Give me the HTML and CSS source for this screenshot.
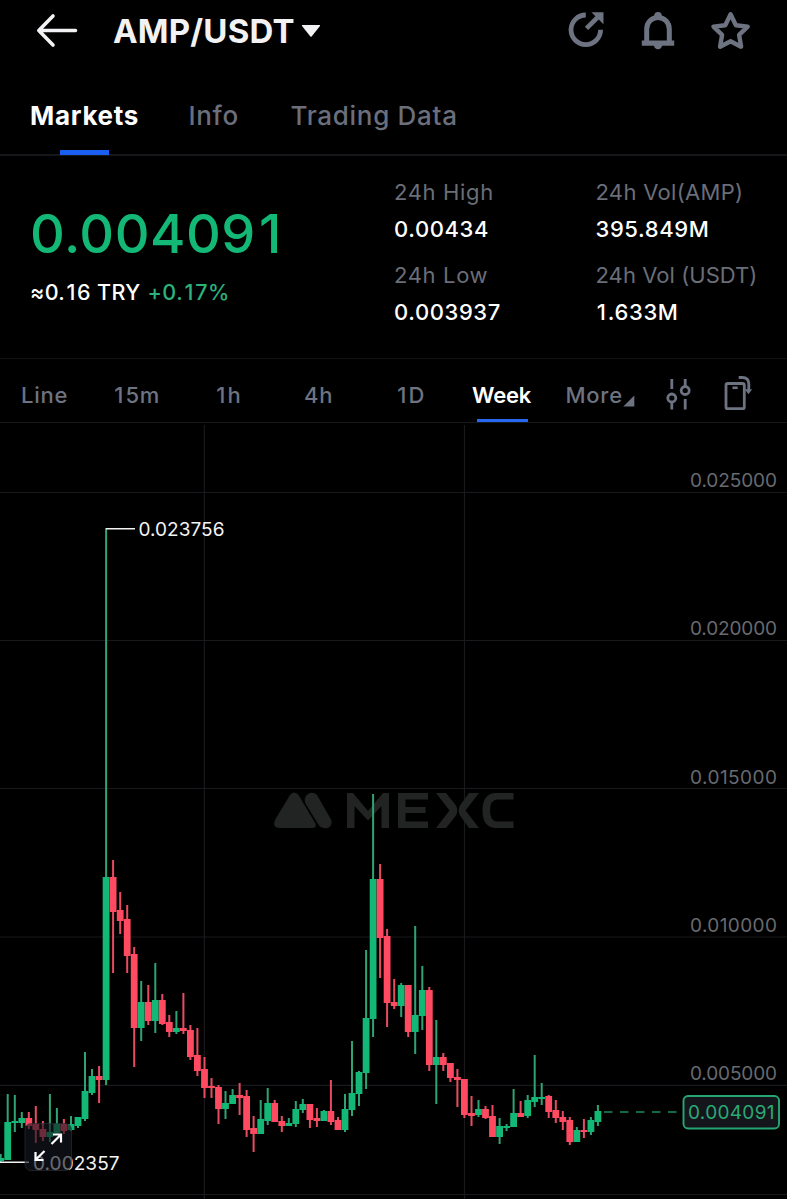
FILE: index.html
```html
<!DOCTYPE html>
<html lang="en">
<head>
<meta charset="utf-8">
<title>AMP/USDT</title>
<link rel="stylesheet" href="styles.css">
</head>
<body>
<header class="topbar">
  <svg class="back" width="44" height="40" viewBox="34 11 44 40"><path d="M53 16 38.800 30.500 53 45M39 30.500H75.500" fill="none" stroke="#f2f2f4" stroke-width="3.600" stroke-linecap="round" stroke-linejoin="round"/></svg>
  <h1 class="pair"><span>AMP/USDT</span></h1>
  <svg class="caret" width="20" height="14" viewBox="0 0 20 14"><path d="M1.500 1h17a.7.7 0 0 1 .5 1l-8.400 10.500a.8.8 0 0 1-1.200 0L1 2a.7.7 0 0 1 .5-1z" fill="#f2f2f4"/></svg>
  <div class="actions">
    <svg width="40" height="44" viewBox="566 8 40 44"><path d="M585.800 15A14.800 14.800 0 1 0 600.600 29.800" fill="none" stroke="#6d7380" stroke-width="4.800"/><path d="M586.500 28.300 598.500 16.500" fill="none" stroke="#6d7380" stroke-width="4.600"/><path d="M591.500 12.200H603.500V24.300Z" fill="#6d7380"/></svg>
    <svg width="40" height="44" viewBox="637.500 8 40 44"><path d="M647.200 42V29a11.200 11.500 0 0 1 22.600 0V42" fill="none" stroke="#6d7380" stroke-width="5"/><path d="M642.300 40.500H674.700V45.800H642.300Z" fill="#6d7380"/><circle cx="658.500" cy="15.700" r="3.800" fill="#6d7380"/><path d="M654.300 45h8.400a4.200 4.200 0 0 1-8.400 0" fill="#6d7380"/></svg>
    <svg width="42" height="44" viewBox="709 8 42 44"><path d="M730.600 14.300 735.900 25.200 747.700 26.600 739.100 34.900 741.100 46.700 730.600 41.200 720.100 46.700 722.100 34.900 713.500 26.600 725.300 25.200Z" fill="none" stroke="#6d7380" stroke-width="4.400" stroke-linejoin="round"/></svg>
  </div>
</header>
<nav class="tabs">
  <div class="tab tab-on t1"><span>Markets</span></div>
  <div class="tab t2"><span>Info</span></div>
  <div class="tab t3"><span>Trading Data</span></div>
</nav>
<section class="stats">
  <div class="quote">
    <div class="price"><span>0.00409<i>1</i></span></div>
    <div class="sub"><span class="fiat">≈0.<i>1</i>6 TRY</span><span class="chg">+0.<i>1</i>7%</span></div>
  </div>
  <dl class="col">
    <dt><span>24h High</span></dt><dd><span>0.00434</span></dd>
    <dt><span>24h Low</span></dt><dd><span>0.003937</span></dd>
  </dl>
  <dl class="col col-vol">
    <dt class="vol-base"><span>24h Vol(AMP)</span></dt><dd><span>395.849M</span></dd>
    <dt><span>24h Vol (USDT)</span></dt><dd><span><i>1</i>.633M</span></dd>
  </dl>
</section>
<nav class="intervals">
  <div class="iv i1"><span>Line</span></div>
  <div class="iv i2"><span><i>1</i>5m</span></div>
  <div class="iv i3"><span><i>1</i>h</span></div>
  <div class="iv i4"><span>4h</span></div>
  <div class="iv i5"><span><i>1</i>D</span></div>
  <div class="iv i6 iv-on"><span>Week</span></div>
  <div class="iv i7"><span>More</span><svg class="tri" width="12" height="12" viewBox="0 0 12 12"><path d="M11.300.5V11.500H.300Z" fill="#6d7380"/></svg></div>
  <svg class="tool" width="28" height="36" viewBox="664 376 28 36"><g fill="none" stroke="#6d7380" stroke-width="2.800"><path d="M671.800 379v10M671.800 402v7.500M685.200 379v7M685.200 399v10.500"/><circle cx="671.800" cy="398" r="4"/><circle cx="685.200" cy="390.500" r="4"/></g></svg>
  <svg class="tool2" width="32" height="38" viewBox="722 374 32 38"><g fill="none" stroke="#6d7380" stroke-width="2.800"><rect x="726" y="383.500" width="18.300" height="25.200" rx="1.800"/><path d="M732.500 387.800h5.200" stroke-width="2.600"/><path d="M738.700 377.500h3.500q6.600 0 6.600 6.500v6"/></g><path d="M744.800 389.300h7.300l-3.600 5z" fill="#6d7380"/></svg>
</nav>
<main class="chart">
<svg width="787" height="776" viewBox="0 423 787 776">
  <path class="grid" d="M0 492.500H787M0 640.500H787M0 788.500H787M0 937H787M0 1085.300H787M0 1194.500H787M204.400 425V1199M464.500 425V1199"/>
  <g fill="#222423">
    <path d="M290 795Q294 790 298.500 795L315.500 823.500Q317 828 312 828H279Q272 827 275 820Z"/>
    <path d="M305.500 803.500C302 796 311 789 317 795L331 819.500C334 828 324 831 319 825.500Z"/>
    <path d="M347 828V793H353L368 811 383 793H389V828H381.500V806L368 820.500 354.500 806V828Z"/>
    <path d="M398 793H428V799.500H405.500V807H425.500V813H405.500V821.500H428V828H398Z"/>
    <path d="M436 793H446L456 805.500Q458.500 810.500 456 815.500L446 828H436L449.500 810.500ZM479 793H469L460 805.500Q457.500 810.500 460 815.500L469 828H479L465.500 810.500Z"/>
    <path d="M513.500 793V799.500H497Q490 800 490 810.500T497 821.500H513.500V828H495Q482.500 827 482.500 810.500T495 793Z"/>
  </g>
  <g id="candles"></g>
  <path d="M604 1112H678" stroke="#1f8a5c" stroke-width="1.300" stroke-dasharray="8.500 7.500"/>
  <path d="M106 528.700H135M0 1162.300H29" stroke="#f4f4f4" stroke-width="1.600"/>
  <g class="axis">
    <text x="690" y="487" textLength="87">0.025000</text>
    <text x="690" y="635" textLength="87">0.020000</text>
    <text x="690" y="783.500" textLength="87">0.015000</text>
    <text x="690" y="932" textLength="87">0.010000</text>
    <text x="690" y="1080.300" textLength="87">0.005000</text>
  </g>
  <text class="mark" x="138.500" y="536" textLength="86">0.023756</text>
  <text class="mark" x="33" y="1169.700" textLength="86.500">0.002357</text>
  <rect x="683.500" y="1096" width="95.500" height="32.500" rx="4.500" fill="#14161c" stroke="#26a673" stroke-width="1.900"/>
  <text class="now" x="688" y="1119" textLength="86.500">0.004091</text>
  <rect x="25" y="1123.500" width="46.500" height="47" rx="6" fill="#14161e" fill-opacity=".62" stroke="#30343c" stroke-opacity=".6"/>
  <path d="M51.500 1144 60.500 1135M53 1134.500H61V1142.500M44.500 1151 36 1159.500M35.500 1152V1160H43.500" fill="none" stroke="#fff" stroke-width="2.200"/>
</svg>
</main>
<script src="chart.js"></script>
</body>
</html>
```
FILE: styles.css
```css
* { box-sizing: border-box; }
body { margin: 0; width: 787px; height: 1199px; overflow: hidden; background: #000; color: #fff; font-family: Inter, "Liberation Sans", sans-serif; font-feature-settings: "calt" 0; }
svg { display: block; flex: none; }
span { white-space: nowrap; }
i { font-style: normal; margin: 0 .06em; }
.topbar { display: flex; align-items: center; height: 62px; padding-left: 33.500px; }
.pair { margin: 0 0 0 35.500px; width: 180px; font-size: 33px; line-height: 40px; font-weight: 700; color: #f2f2f4; letter-spacing: .2px; }
.caret { margin-left: 8px; }
.actions { display: flex; gap: 31.500px; margin-left: 244.500px; height: 62px; align-items: center; padding-bottom: 2px; }
.tabs { display: flex; height: 94px; border-bottom: 2px solid #16171a; padding-left: 30px; }
.tab { position: relative; height: 93px; padding-top: 37.500px; font-size: 26px; line-height: 32px; font-weight: 500; color: #6b6f7b; letter-spacing: .7px; }
.tab-on { color: #fff; font-weight: 700; }
.tab-on::after { content: ""; position: absolute; left: 30px; top: 88px; width: 49px; height: 5px; background: #1a5ff2; }
.t1 { width: 158.500px; } .t2 { width: 102px; }
.stats { display: grid; grid-template-columns: 364px 201.500px 1fr; height: 202px; padding-left: 30px; }
.quote { padding-top: 45px; }
.price { font-size: 54px; line-height: 66px; color: #13b877; letter-spacing: .5px; font-weight: 500; }
.sub { display: flex; gap: 7px; margin-top: 11px; font-size: 21.500px; line-height: 28px; font-weight: 500; letter-spacing: .35px; }
.chg { color: #2bb27c; letter-spacing: .5px; }
.col { margin: 0; padding-top: 19px; font-size: 22px; }
.col dt { height: 35px; line-height: 34px; color: #6a6e78; letter-spacing: .65px; }
.col-vol dt { letter-spacing: .05px; }
.col-vol .vol-base { letter-spacing: .3px; }
.col dd { margin: 0; height: 48px; line-height: 38px; font-weight: 500; letter-spacing: .6px; }
.intervals { display: flex; height: 65px; border-top: 1.500px solid #121316; border-bottom: 1px solid #17181b; padding-left: 21px; }
.iv { position: relative; display: flex; height: 64px; line-height: 73px; font-size: 22px; font-weight: 500; color: #6d7380; letter-spacing: .75px; }
.iv-on { color: #fff; font-weight: 600; letter-spacing: -.2px; }
.iv-on::after { content: ""; position: absolute; left: 5px; top: 60px; width: 51px; height: 3px; background: #2868f0; }
.i1 { width: 92px; } .i2 { width: 102px; } .i3 { width: 89px; } .i4 { width: 92px; } .i5 { width: 76px; } .i6 { width: 93.500px; } .i7 { width: 98.500px; }
.tri { margin: 36px 0 0 0; }
.tool { margin-top: 17px; }
.tool2 { margin: 15px 0 0 30px; }
.chart { height: 776px; }
.grid { stroke: #17191d; stroke-width: 1.200; fill: none; }
.axis { font-size: 19px; fill: #686a6f; }
.mark { font-size: 19px; fill: #f4f4f4; }
.now { font-size: 19px; fill: #2aa974; }
.up { fill: #13b877; } .down { fill: #ff4a62; }
.wup { fill: #2fa374; } .wdown { fill: #e84c62; }
```
FILE: chart.js
```js
// Each candle: direction, high, body top, body bottom, low
const candles = `g 1154 1158 1161 1162|g 1094 1122 1160 1160|g 1095 1121 1123 1132|g 1112 1118 1123 1128|r 1112 1118 1126 1129|r 1106 1124 1130 1143|r 1121 1129 1137 1141|g 1094 1132 1137 1142|g 1108 1124 1133 1134|r 1119 1124 1131 1134|g 1116 1124 1130 1131|g 1117 1117 1126 1128|g 1052 1091 1119 1121|g 1069 1076 1093 1095|r 1066 1076 1080 1103|g 528 877 1080 1085|r 860 877 912 973|r 892 910 921 934|r 905 919 956 973|r 947 954 1028 1067|g 981 1002 1028 1041|r 985 1002 1021 1025|g 963 1000 1021 1033|r 994 1000 1024 1025|r 1015 1022 1032 1037|g 1011 1028 1032 1034|r 993 1028 1031 1034|r 1025 1030 1057 1060|r 1028 1055 1071 1076|r 1057 1069 1088 1098|r 1078 1086 1088 1098|r 1085 1087 1109 1124|g 1091 1103 1109 1119|g 1089 1095 1104 1104|r 1083 1095 1098 1115|r 1090 1096 1130 1137|r 1116 1128 1134 1152|g 1100 1119 1134 1134|g 1088 1103 1121 1125|r 1100 1103 1122 1122|r 1116 1121 1126 1132|g 1118 1123 1126 1126|g 1101 1109 1124 1127|g 1099 1104 1110 1113|r 1104 1104 1120 1128|r 1108 1118 1121 1127|g 1110 1111 1121 1121|r 1080 1111 1122 1125|r 1117 1120 1130 1130|g 1094 1109 1130 1132|g 1041 1093 1110 1116|g 1071 1072 1094 1106|g 950 1018 1073 1089|g 794 879 1019 1037|r 864 879 938 978|r 929 936 1003 1027|r 979 1002 1006 1009|g 983 985 1006 1017|r 985 985 1032 1037|g 926 1015 1032 1054|g 966 990 1016 1030|r 987 990 1065 1071|g 1020 1057 1065 1104|r 1053 1057 1065 1071|r 1063 1063 1078 1082|r 1069 1077 1080 1107|r 1079 1079 1115 1118|r 1096 1113 1116 1126|g 1100 1109 1115 1117|r 1106 1109 1118 1119|r 1105 1116 1137 1137|g 1118 1126 1137 1144|g 1124 1126 1128 1131|g 1089 1113 1127 1127|r 1101 1113 1117 1117|g 1095 1100 1116 1118|g 1055 1097 1102 1107|g 1083 1097 1099 1105|r 1095 1096 1112 1118|r 1100 1110 1118 1123|r 1111 1117 1122 1130|r 1117 1120 1142 1145|g 1127 1130 1142 1142|r 1119 1130 1132 1138|g 1117 1120 1132 1135|g 1105 1111 1122 1126`;
const rect = (cls, x, y, w, h) => `<rect class="${cls}" x="${x.toFixed(1)}" y="${y}" width="${w}" height="${h}"/>`;
document.getElementById("candles").innerHTML = candles.split("|").map((row, i) => {
  const [dir, ...v] = row.split(" ");
  const [hi, top, bottom, lo] = v.map(Number);
  const x = 106.1 + (i - 15) * 7.026;
  const cls = dir === "g" ? "up" : "down";
  return rect("w" + cls, x - 1, hi, 2, lo - hi) + rect(cls, x - 3.4, top, 6.8, bottom - top);
}).join("");
```
